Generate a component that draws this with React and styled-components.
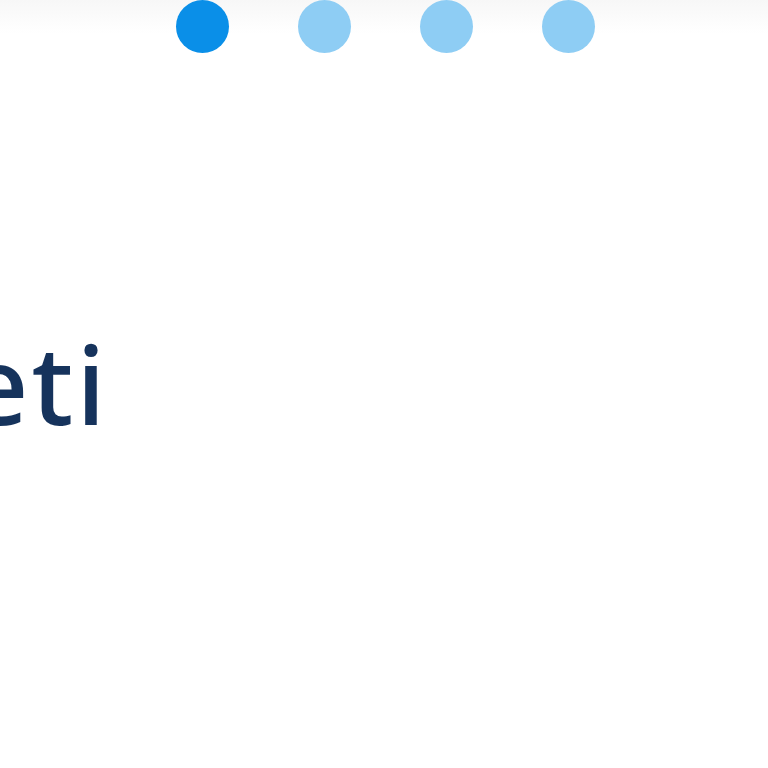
import React from 'react';
import styled, { createGlobalStyle } from 'styled-components';

const GlobalStyle = createGlobalStyle`
  html, body {
    margin: 0;
    padding: 0;
    background: #ffffff;
  }
  body {
    font-family: "Noto Sans", "Open Sans", sans-serif;
  }
`;

const steps = [true, false, false, false];

function App() {
  return (
    <>
      <GlobalStyle />
      <Page>
        <Pager>
          {steps.map((active, i) => (
            <Dot key={i} $active={active} />
          ))}
        </Pager>
        <Title>eti</Title>
      </Page>
    </>
  );
}

export default App;

const Page = styled.div`
  width: 768px;
  height: 768px;
  overflow: hidden;
  background: linear-gradient(to bottom, #f7f7f7 0px, #ffffff 34px);
`;

const Pager = styled.div`
  display: flex;
  justify-content: center;
  gap: 69px;
  padding-left: 2px;
`;

const Dot = styled.span`
  width: 53px;
  height: 53px;
  border-radius: 50%;
  background: ${(p) => (p.$active ? '#0a8fe8' : '#8ecdf4')};
`;

const Title = styled.h1`
  margin: 275px 0 0 -34px;
  font-family: "Noto Sans", "Open Sans", sans-serif;
  font-size: 109px;
  font-weight: 550;
  line-height: 1;
  letter-spacing: 3px;
  color: #16335c;
  white-space: nowrap;
`;
